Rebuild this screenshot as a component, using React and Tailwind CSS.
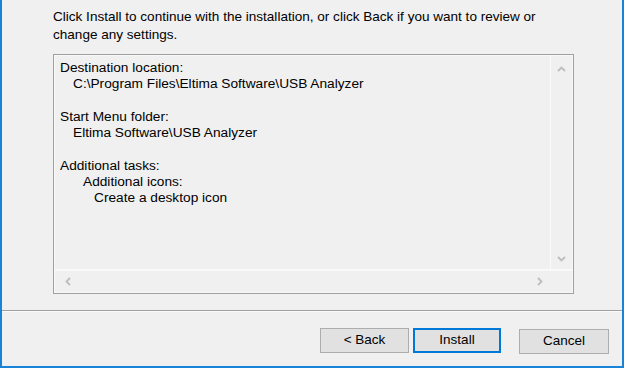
const Chevron = ({ dir }) => {
  const pts = {
    up: '1,6 4.5,2.5 8,6',
    down: '1,3 4.5,6.5 8,3',
    left: '6,1 2.5,4.5 6,8',
    right: '3,1 6.5,4.5 3,8',
  };
  return (
    <svg width="9" height="9" viewBox="0 0 9 9" className="block">
      <polyline points={pts[dir]} fill="none" stroke="#bdbdbd" strokeWidth="1.8" />
    </svg>
  );
};

const Button = ({ label, focused, width }) => (
  <button
    className={
      width +
      (focused
        ? ' h-[25px] border-2 border-[#0078d7] bg-[#e1e1e1] text-[13.5px] text-black'
        : ' h-[25px] border border-[#adadad] bg-[#e1e1e1] text-[13.5px] text-black')
    }
  >
    {label}
  </button>
);

export default function App() {
  const lines = [
    { text: 'Destination location:', indent: 'pl-0' },
    { text: 'C:\\Program Files\\Eltima Software\\USB Analyzer', indent: 'pl-[13px]' },
    { text: '\u00a0', indent: 'pl-0' },
    { text: 'Start Menu folder:', indent: 'pl-0' },
    { text: 'Eltima Software\\USB Analyzer', indent: 'pl-[13px]' },
    { text: '\u00a0', indent: 'pl-0' },
    { text: 'Additional tasks:', indent: 'pl-0' },
    { text: 'Additional icons:', indent: 'pl-[23px]' },
    { text: 'Create a desktop icon', indent: 'pl-[34px]' },
  ];

  return (
    <div className="w-[625px] h-[370px] bg-white font-['Liberation_Sans',Arial,sans-serif] text-black">
      <div className="h-[368px] w-[624px] border-x-2 border-b-2 border-[#1883d7] bg-[#f0f0f0] flex flex-col">
        <p className="ml-[51px] mt-[8px] w-[510px] text-[13.55px] leading-[18px]">
          Click Install to continue with the installation, or click Back if you want to review or change any settings.
        </p>

        <div className="ml-[51px] mt-[10px] w-[521px] h-[240px] border border-[#a0a0a0] flex flex-col">
          <div className="flex-1 flex border border-[#f8f8f8]">
            <div className="flex-1 border-r border-b border-[#fafafa] pl-[5px] pt-[4px] text-[13.7px] leading-[16.25px]">
              {lines.map((l, i) => (
                <div key={i} className={l.indent}>
                  {l.text}
                </div>
              ))}
            </div>
            <div className="w-[21px] flex flex-col items-center justify-between pt-[9px] pb-[6px] border-b border-[#fafafa]">
              <Chevron dir="up" />
              <Chevron dir="down" />
            </div>
          </div>
          <div className="h-[22px] flex items-center border-x border-b border-[#f8f8f8]">
            <div className="w-[497px] flex items-center justify-between pl-[9px] pr-[8px]">
              <Chevron dir="left" />
              <Chevron dir="right" />
            </div>
          </div>
        </div>

        <div className="mt-[16px] border-t border-[#a0a0a0] border-b border-b-[#fafafa]" />

        <div className="flex justify-end pr-[13px] mt-[16px]">
          <div className="flex gap-[4px]">
            <Button label="< Back" width="w-[89px]" />
            <Button label="Install" width="w-[88px]" focused />
          </div>
          <div className="ml-[18px]">
            <Button label="Cancel" width="w-[90px]" />
          </div>
        </div>
      </div>
    </div>
  );
}
